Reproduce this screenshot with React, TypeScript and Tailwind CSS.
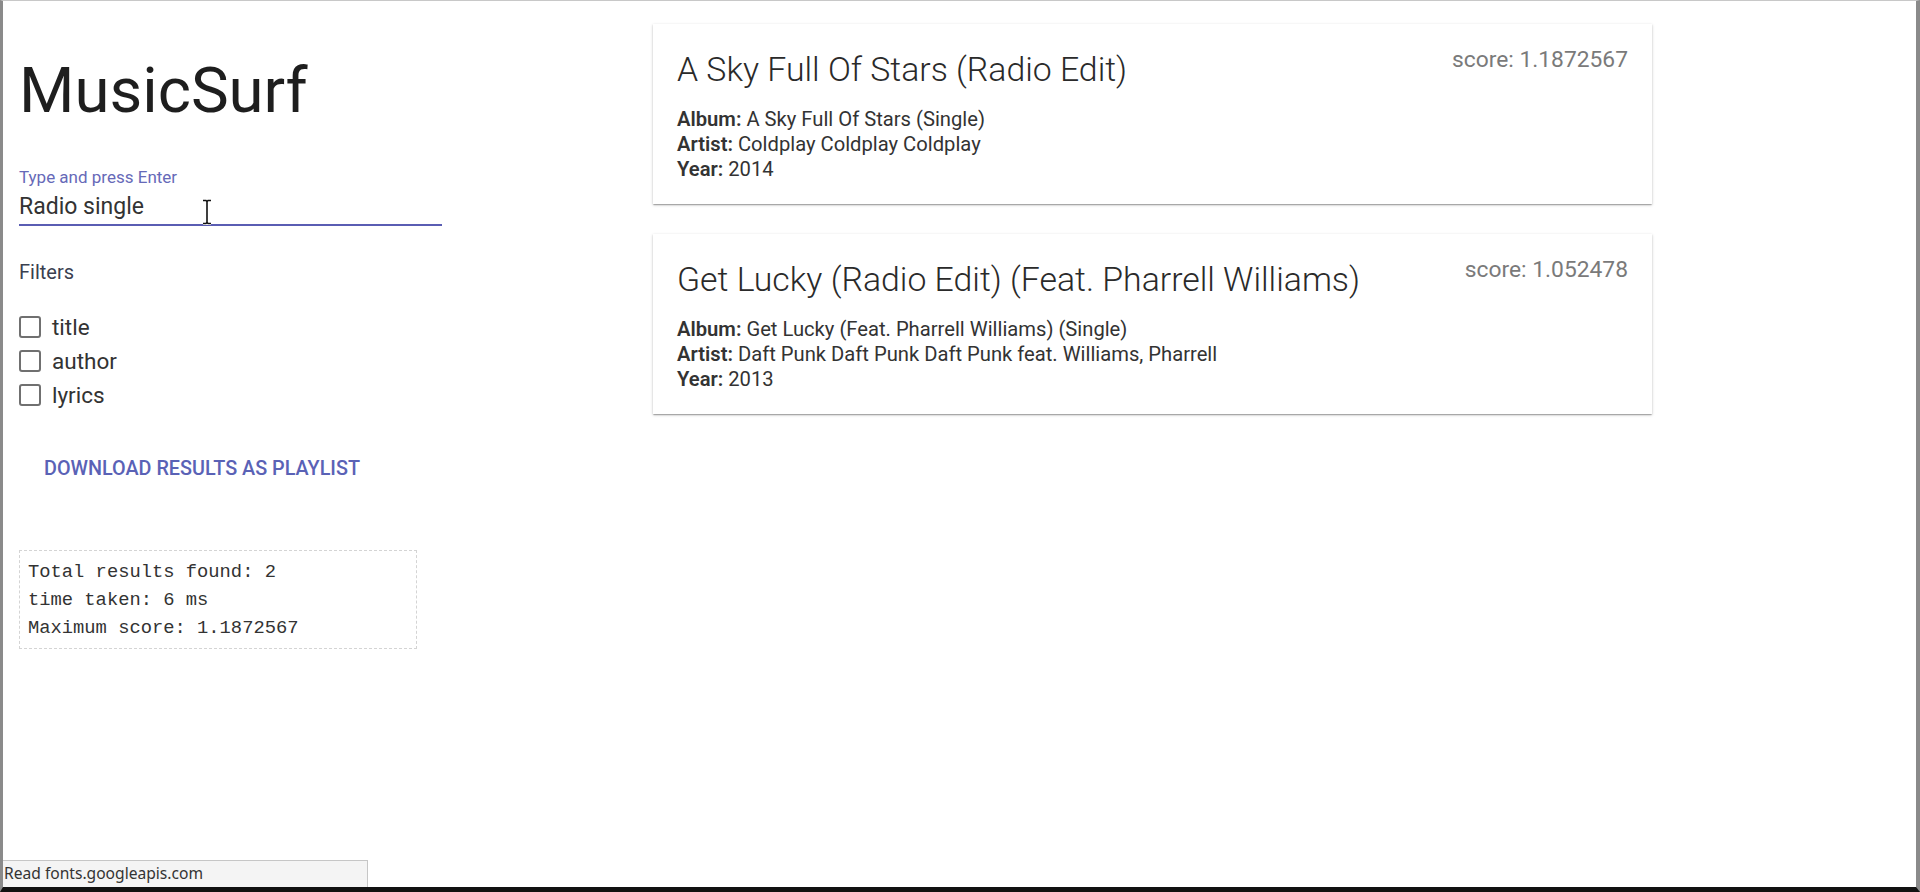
import React from "react";

const roboto = { fontFamily: "Roboto, 'Liberation Sans', sans-serif" };

function Card({
  title,
  score,
  album,
  artist,
  year,
}: {
  title: string;
  score: string;
  album: string;
  artist: string;
  year: string;
}) {
  return (
    <div className="h-[180px] bg-white px-6 pt-[22px] shadow-[0_1px_3px_rgba(0,0,0,0.2),0_1px_1px_rgba(0,0,0,0.14),0_2px_1px_-1px_rgba(0,0,0,0.12)]">
      <div className="flex items-start justify-between">
        <h2 className="mt-[4px] text-[33.8px] font-light leading-[40px] text-[#2a2a2a]">{title}</h2>
        <span className="text-[22.8px] leading-[28px] text-[#7a7a7a]">{score}</span>
      </div>
      <div className="mt-[16.5px] text-[20.2px] leading-[25px] text-[#333]">
        <div>
          <span className="font-semibold">Album:</span> {album}
        </div>
        <div>
          <span className="font-semibold">Artist:</span> {artist}
        </div>
        <div>
          <span className="font-semibold">Year:</span> {year}
        </div>
      </div>
    </div>
  );
}

function Check({ label }: { label: string }) {
  return (
    <label className="flex h-[34px] items-center gap-[11px]">
      <span className="h-[22px] w-[22px] rounded-[3px] border-2 border-[#707070] bg-white" />
      <span className="text-[22.5px] leading-[26px] text-[#333]">{label}</span>
    </label>
  );
}

export default function App() {
  return (
    <div
      className="relative h-[892px] w-[1920px] overflow-hidden border-t border-r-4 border-b-[5px] border-l-[3px] border-t-[#c8c8c8] border-r-[#8a8a8a] border-b-[#111] border-l-[#8a8a8a] bg-white"
      style={roboto}
    >
      <div className="flex">
        {/* Left column */}
        <div className="flex w-[650px] shrink-0 flex-col pl-4">
          <h1 className="mt-[57.5px] text-[63.5px] font-normal leading-[64px] text-[#1e1e1e]">MusicSurf</h1>
          <div className="mt-[44.5px] text-[17px] leading-[20px] text-[#6669b8]">Type and press Enter</div>
          <div className="mt-[6px] w-[423px] border-b-2 border-[#5a5db3] pb-[3px]">
            <div className="text-[23px] leading-[28px] text-[#333]">Radio single</div>
          </div>
          <div className="mt-[34px] text-[20px] leading-[24px] text-[#3a4050]">Filters</div>
          <div className="mt-[26px] flex flex-col">
            <Check label="title" />
            <Check label="author" />
            <Check label="lyrics" />
          </div>
          <div className="mt-[45px] pl-[25px] text-[19.8px] font-medium uppercase leading-[24px] text-[#5a62b6]">
            Download results as playlist
          </div>
          <div
            className="mt-[69px] h-[99px] w-[398px] border border-dashed border-[#d4d4d4] pl-[8px] pt-[7px] text-[18.8px] leading-[28px] text-[#333]"
            style={{ fontFamily: "'Liberation Mono', 'Courier New', monospace" }}
          >
            <div>Total results found: 2</div>
            <div>time taken: 6 ms</div>
            <div>Maximum score: 1.1872567</div>
          </div>
        </div>

        {/* Right column */}
        <div className="flex w-[999px] shrink-0 flex-col gap-[30px] pt-[23px]">
          <Card
            title="A Sky Full Of Stars (Radio Edit)"
            score="score: 1.1872567"
            album="A Sky Full Of Stars (Single)"
            artist="Coldplay Coldplay Coldplay"
            year="2014"
          />
          <Card
            title="Get Lucky (Radio Edit) (Feat. Pharrell Williams)"
            score="score: 1.052478"
            album="Get Lucky (Feat. Pharrell Williams) (Single)"
            artist="Daft Punk Daft Punk Daft Punk feat. Williams, Pharrell"
            year="2013"
          />
        </div>
      </div>

      {/* Text cursor (I-beam) */}
      <svg className="absolute left-[197px] top-[198px]" width="14" height="26" viewBox="0 0 14 26">
        <path d="M3 1.5h3l1 1 1-1h3M7 2.5v21M3 24.5h3l1-1 1 1h3" stroke="#fff" strokeWidth="3.4" fill="none" />
        <path d="M3 1.5h3l1 1 1-1h3M7 2.5v21M3 24.5h3l1-1 1 1h3" stroke="#111" strokeWidth="1.6" fill="none" />
      </svg>

      {/* Browser status bubble */}
      <div
        className="absolute bottom-0 left-0 flex h-[27px] w-[365px] items-center border-t border-r border-[#c6c6c6] bg-[#f4f4f4] pl-[1px] text-[15.6px] text-[#333]"
        style={{ fontFamily: "'Noto Sans', 'Open Sans', sans-serif" }}
      >
        Read fonts.googleapis.com
      </div>
    </div>
  );
}
